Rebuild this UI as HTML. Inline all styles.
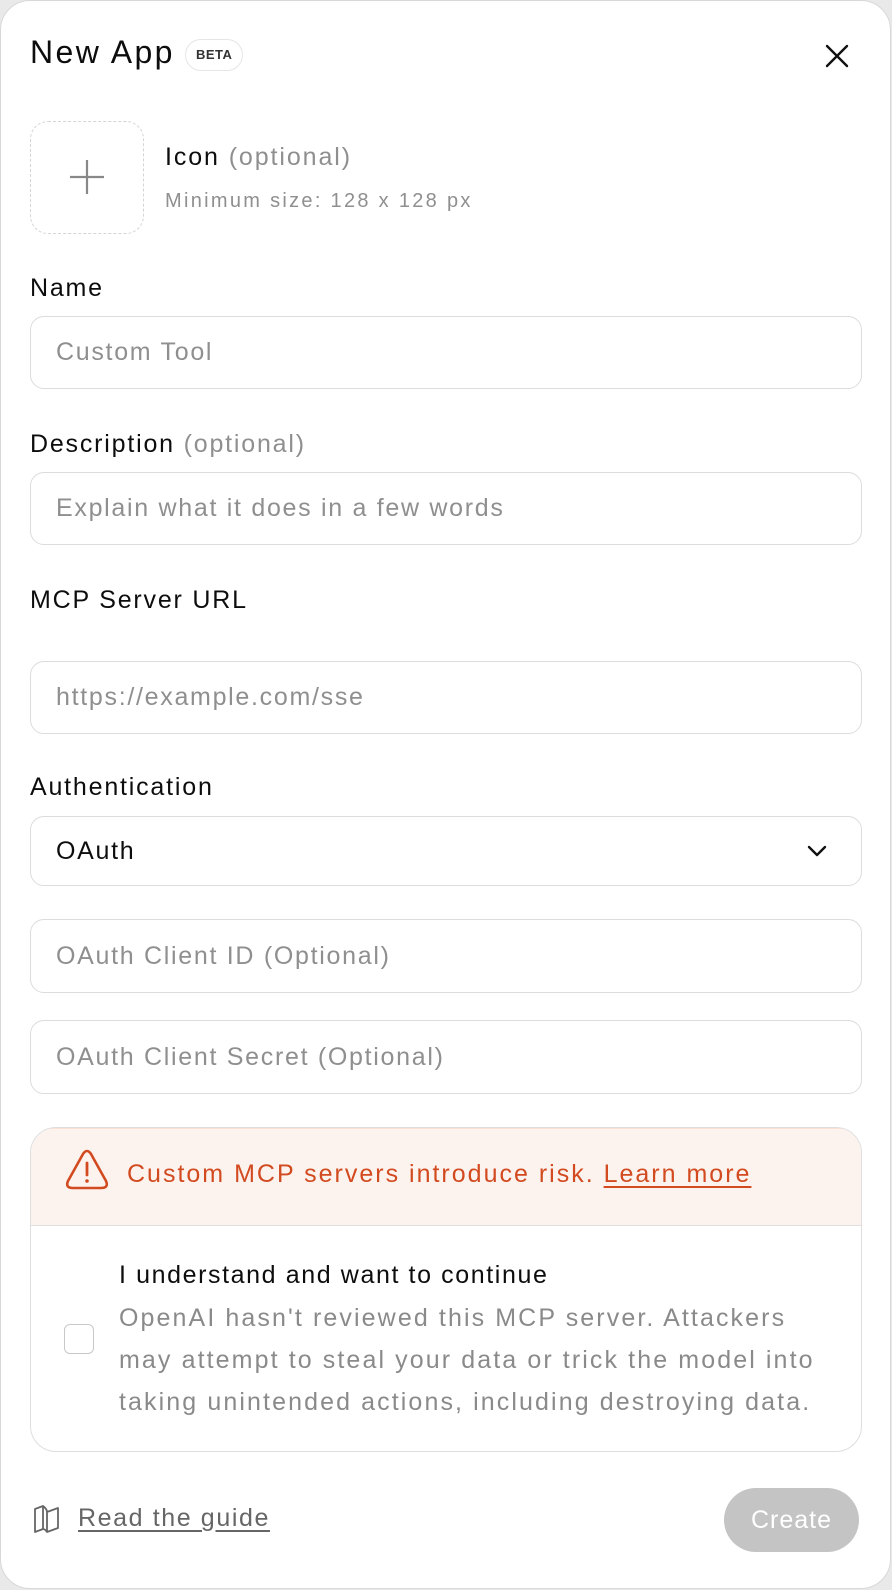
<!DOCTYPE html>
<html><head><meta charset="utf-8"><style>
*{box-sizing:border-box;margin:0;padding:0}
html,body{width:892px;height:1590px;background:#e9e9e9;font-family:"Liberation Sans",sans-serif;overflow:hidden}
.m{position:absolute;left:0;top:0;width:891px;height:1589px;background:#fff;border-radius:30px;border:1px solid #d8d8d8}
.a{position:absolute;white-space:nowrap}
.t{left:29px;top:33px;font-size:32px;letter-spacing:2.4px;color:#0d0d0d}
.beta{left:184px;top:38px;height:32px;padding:0 10px;border:1px solid #e5e5e5;border-radius:16px;font-size:13px;font-weight:bold;letter-spacing:.5px;line-height:30px;color:#333}
.lbl{left:29px;font-size:25px;letter-spacing:1.8px;color:#0d0d0d}
.opt{color:#8f8f8f}
.in{left:29px;width:832px;border:1.5px solid #dcdcdc;border-radius:14px;font-size:25px;letter-spacing:1.7px;color:#8f8f8f;padding-left:25px;display:flex;align-items:center}
</style></head><body><div class="m">
<div class="a t">New App</div>
<div class="a beta">BETA</div>
<svg class="a" style="left:823px;top:42px" width="26" height="26" viewBox="0 0 26 26"><path d="M3 3L23 23M23 3L3 23" stroke="#111" stroke-width="2.4" stroke-linecap="round"/></svg>
<div class="a" style="left:29px;top:120px;width:114px;height:113px;border:1.5px dashed #d4d4d4;border-radius:18px"></div>
<svg class="a" style="left:68px;top:158px" width="36" height="36" viewBox="0 0 36 36"><path d="M18 1V35M1 18H35" stroke="#888" stroke-width="2.2"/></svg>
<div class="a" style="left:164px;top:142px;font-size:25px;letter-spacing:1.9px;color:#0d0d0d">Icon <span class="opt">(optional)</span></div>
<div class="a" style="left:164px;top:189px;font-size:20px;letter-spacing:2.3px;color:#8f8f8f">Minimum size: 128 x 128 px</div>
<div class="a lbl" style="top:273px">Name</div>
<div class="a in" style="top:315px;height:73px">Custom Tool</div>
<div class="a lbl" style="top:429px">Description <span class="opt">(optional)</span></div>
<div class="a in" style="top:471px;height:73px">Explain what it does in a few words</div>
<div class="a lbl" style="top:585px">MCP Server URL</div>
<div class="a in" style="top:660px;height:73px">https://example.com/sse</div>
<div class="a lbl" style="top:772px">Authentication</div>
<div class="a in" style="top:815px;height:70px;color:#0d0d0d">OAuth</div>
<svg class="a" style="left:806px;top:843px" width="20" height="14" viewBox="0 0 20 14"><path d="M2 3L10 11L18 3" stroke="#111" stroke-width="2.4" fill="none" stroke-linecap="round" stroke-linejoin="round"/></svg>
<div class="a in" style="top:918px;height:74px">OAuth Client ID (Optional)</div>
<div class="a in" style="top:1019px;height:74px">OAuth Client Secret (Optional)</div>
<div class="a" style="left:29px;top:1126px;width:832px;height:325px;border:1.5px solid #dedede;border-radius:26px;overflow:hidden">
<div style="height:98px;background:#fdf3ee;border-bottom:1.5px solid #e0e0e0;border-top:1px solid #fbe0d3"></div>
</div>
<svg class="a" style="left:63px;top:1148px" width="46" height="42" viewBox="0 0 46 42"><path d="M19 5Q23 -1 27 5L42 32Q45 39 37 39H9Q1 39 4 32Z" stroke="#d24a1f" stroke-width="2.6" fill="none" stroke-linejoin="round"/><path d="M23 14V26" stroke="#d24a1f" stroke-width="2.8" stroke-linecap="round"/><circle cx="23" cy="32" r="1.8" fill="#d24a1f"/></svg>
<div class="a" style="left:126px;top:1159px;font-size:25px;letter-spacing:2px;color:#d24a1f">Custom MCP servers introduce risk. <span style="text-decoration:underline;text-underline-offset:4px">Learn more</span></div>
<div class="a" style="left:63px;top:1323px;width:30px;height:30px;border:1.5px solid #c8c8c8;border-radius:6px"></div>
<div class="a" style="left:118px;top:1260px;font-size:25px;letter-spacing:1.6px;color:#0d0d0d">I understand and want to continue</div>
<div class="a" style="left:118px;top:1296px;font-size:25px;letter-spacing:2.1px;line-height:42px;color:#8a8a8a">OpenAI hasn't reviewed this MCP server. Attackers<br>may attempt to steal your data or trick the model into<br>taking unintended actions, including destroying data.</div>
<svg class="a" style="left:31px;top:1503px" width="30" height="30" viewBox="0 0 30 30"><path d="M3 5L11 2V25L3 28Z M11 2Q15 5 15 8V28Q13 25 11 25 M15 8L26 4V24L15 28" stroke="#666" stroke-width="1.8" fill="none" stroke-linejoin="round"/></svg>
<div class="a" style="left:77px;top:1503px;font-size:25px;letter-spacing:1.6px;color:#666;text-decoration:underline;text-underline-offset:4px">Read the guide</div>
<div class="a" style="left:723px;top:1487px;width:135px;height:64px;border-radius:32px;background:#c4c4c4;color:#fff;font-size:25px;letter-spacing:1px;display:flex;align-items:center;justify-content:center">Create</div>
</div></body></html>
